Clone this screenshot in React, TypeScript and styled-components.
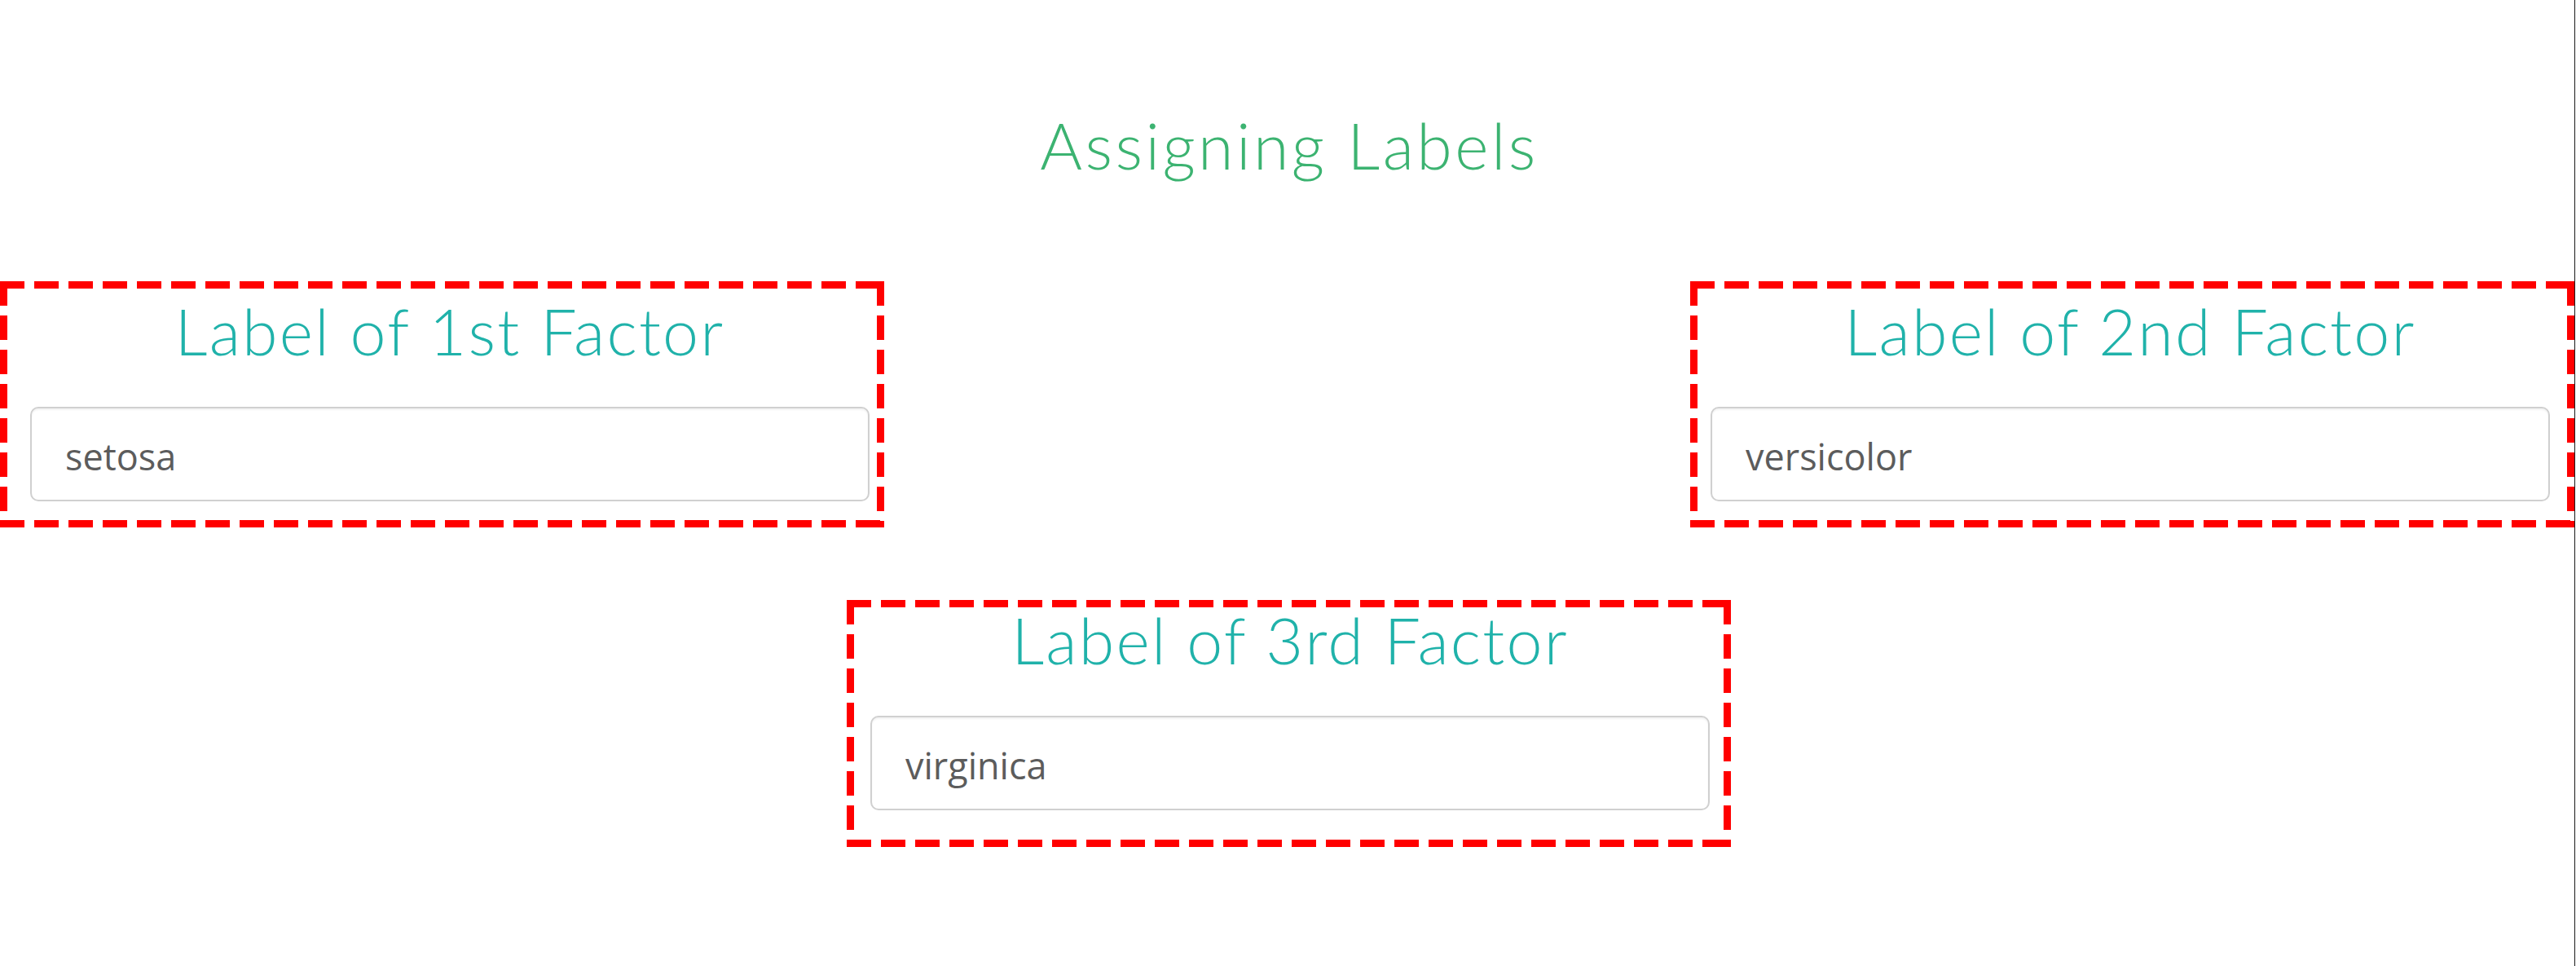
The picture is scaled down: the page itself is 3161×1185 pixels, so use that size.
import styled, { createGlobalStyle } from "styled-components";

const Global = createGlobalStyle`
  html, body {
    margin: 0;
    padding: 0;
    background: #ffffff;
  }
`;

type Factor = {
  label: string;
  value: string;
};

const factors: Factor[] = [
  { label: "Label of 1st Factor", value: "setosa" },
  { label: "Label of 2nd Factor", value: "versicolor" },
  { label: "Label of 3rd Factor", value: "virginica" },
];

const DASH = "#ff0000";
const B = 9;

const Page = styled.div`
  width: 3160px;
  min-height: 1185px;
  box-sizing: border-box;
  border-right: 1px solid #1a1a1a;
  padding-top: 139px;
  display: flex;
  flex-direction: column;
`;

const Title = styled.h2`
  margin: 0 0 128px 0;
  text-align: center;
  padding-left: 5px;
  font-family: "Lato", "Open Sans", sans-serif;
  font-weight: 300;
  font-size: 79px;
  line-height: 78px;
  letter-spacing: 3.4px;
  color: #3cb371;
`;

const Row = styled.div<{ $center?: boolean }>`
  display: flex;
  justify-content: ${(p) => (p.$center ? "center" : "space-between")};
  padding-left: ${(p) => (p.$center ? "4px" : "0")};
  margin-bottom: 89px;
`;

// long red dashes drawn as gradients: the browser's own dashed border is too short
const Box = styled.div<{ $padTop: number; $padLeft: number; $h: number }>`
  width: 1085px;
  height: ${(p) => p.$h}px;
  box-sizing: border-box;
  padding: ${(p) => B + p.$padTop}px 0 0 ${(p) => B + p.$padLeft}px;
  background-image:
    repeating-linear-gradient(90deg, ${DASH} 0 30px, transparent 30px 42px),
    repeating-linear-gradient(90deg, ${DASH} 0 30px, transparent 30px 42px),
    repeating-linear-gradient(180deg, ${DASH} 0 30px, transparent 30px 42px),
    repeating-linear-gradient(180deg, ${DASH} 0 30px, transparent 30px 42px);
  background-size:
    100% ${B}px,
    100% ${B}px,
    ${B}px 100%,
    ${B}px 100%;
  background-position:
    0 0,
    0 100%,
    0 0,
    100% 0;
  background-repeat: no-repeat;
  display: flex;
  flex-direction: column;
  align-items: flex-start;
`;

const Label = styled.h3`
  margin: 0;
  width: 1030px;
  text-align: center;
  font-family: "Lato", "Open Sans", sans-serif;
  font-weight: 300;
  font-size: 79px;
  line-height: 79px;
  letter-spacing: 2.2px;
  color: #20b2aa;
`;

const Input = styled.input`
  margin-top: 54px;
  width: 1030px;
  height: 116px;
  box-sizing: border-box;
  border: 2px solid #d0d0d0;
  border-radius: 10px;
  box-shadow: inset 0 2px 2px rgba(0, 0, 0, 0.05);
  padding: 5px 20px 0 41px;
  font-family: "Open Sans", "Liberation Sans", sans-serif;
  font-size: 45px;
  color: #5c5c5c;
  background: #ffffff;
  outline: none;
`;

const FactorBox = ({
  factor,
  padTop,
  padLeft,
  h,
}: {
  factor: Factor;
  padTop: number;
  padLeft: number;
  h: number;
}) => (
  <Box $padTop={padTop} $padLeft={padLeft} $h={h}>
    <Label>{factor.label}</Label>
    <Input type="text" defaultValue={factor.value} />
  </Box>
);

export default function App() {
  return (
    <>
      <Global />
      <Page>
        <Title>Assigning Labels</Title>
        <Row>
          <FactorBox factor={factors[0]} padTop={12} padLeft={28} h={302} />
          <FactorBox factor={factors[1]} padTop={12} padLeft={16} h={302} />
        </Row>
        <Row $center>
          <FactorBox factor={factors[2]} padTop={0} padLeft={20} h={303} />
        </Row>
      </Page>
    </>
  );
}
